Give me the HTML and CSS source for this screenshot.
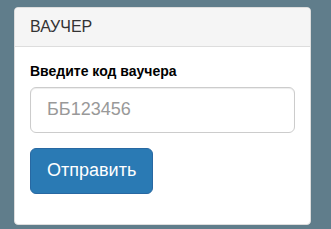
FILE: index.html
```html
<!DOCTYPE html>
<html lang="ru">
<head>
<meta charset="utf-8">
<link rel="stylesheet" href="styles.css">
</head>
<body>
<div class="panel">
  <div class="panel-heading"><h3 class="panel-title">ВАУЧЕР</h3></div>
  <div class="panel-body">
    <form class="voucher-form">
      <div class="form-group">
        <label class="form-label" for="code">Введите код ваучера</label>
        <input class="form-input" id="code" type="text" placeholder="ББ123456">
      </div>
      <div class="form-group">
        <button class="btn-primary" type="button">Отправить</button>
      </div>
    </form>
  </div>
</div>
</body>
</html>
```
FILE: styles.css
```css
* { box-sizing: border-box; }
html, body { margin: 0; padding: 0; }
body {
  background: #607d8b;
  font-family: "Liberation Sans", Arial, sans-serif;
  font-size: 14px;
  line-height: 1.42857;
  color: #333;
  padding: 7px 20px 0 14px;
}
.panel {
  background: #fff;
  border: 1px solid #ddd;
  border-radius: 4px;
  box-shadow: 0 1px 1px rgba(0,0,0,0.05);
}
.panel-heading {
  background: #f5f5f5;
  border-bottom: 1px solid #ddd;
  border-radius: 3px 3px 0 0;
  padding: 10px 15px;
}
.panel-title {
  margin: 0;
  font-size: 16px;
  font-weight: 500;
  line-height: 1.1;
  color: #333;
}
.panel-body { padding: 15px; }
.voucher-form { margin: 0; }
.form-group { margin-bottom: 15px; }
.form-label {
  display: block;
  font-weight: bold;
  margin-bottom: 5px;
  color: #000;
}
.form-input {
  display: block;
  width: 100%;
  height: 46px;
  padding: 10px 16px;
  font-family: inherit;
  font-size: 18px;
  line-height: 1.33;
  color: #555;
  background: #fff;
  border: 1px solid #ccc;
  border-radius: 6px;
  box-shadow: inset 0 1px 1px rgba(0,0,0,0.075);
}
.form-input::placeholder { color: #999; }
.btn-primary {
  display: inline-block;
  height: 46px;
  padding: 10px 16px;
  font-family: inherit;
  font-size: 18px;
  line-height: 1.33;
  color: #fff;
  background: #2a7ab4;
  border: 1px solid #2868a2;
  border-radius: 6px;
  cursor: pointer;
}
```
